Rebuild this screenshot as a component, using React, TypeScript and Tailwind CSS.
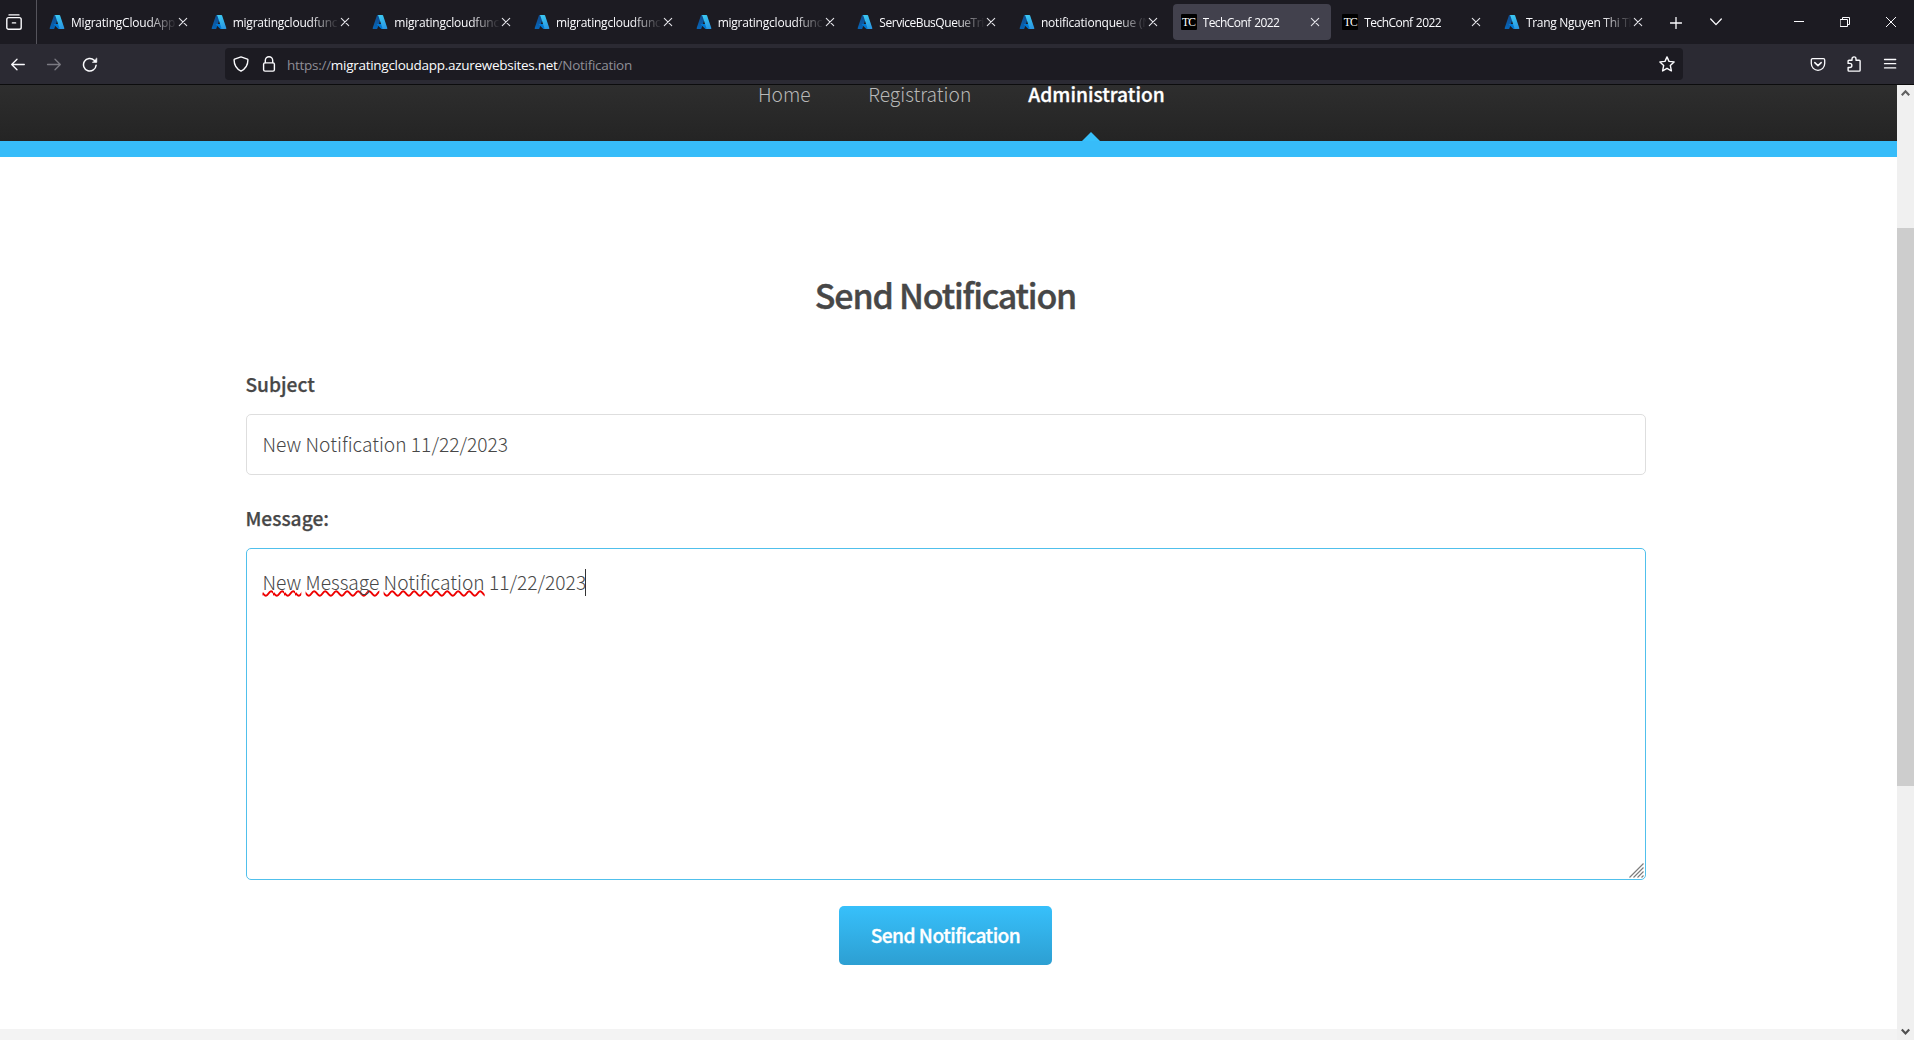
import type { ReactNode } from 'react';

type TabData = { title: string; icon: 'azure' | 'tc'; active?: boolean; tracking: string };

const TABS: TabData[] = [
  { title: 'MigratingCloudApp', icon: 'azure', tracking: 'tracking-[-0.22px]' },
  { title: 'migratingcloudfunc', icon: 'azure', tracking: 'tracking-[-0.22px]' },
  { title: 'migratingcloudfunc', icon: 'azure', tracking: 'tracking-[-0.22px]' },
  { title: 'migratingcloudfunc', icon: 'azure', tracking: 'tracking-[-0.22px]' },
  { title: 'migratingcloudfunc', icon: 'azure', tracking: 'tracking-[-0.22px]' },
  { title: 'ServiceBusQueueTrig', icon: 'azure', tracking: 'tracking-[-0.45px]' },
  { title: 'notificationqueue (N', icon: 'azure', tracking: 'tracking-[-0.22px]' },
  { title: 'TechConf 2022', icon: 'tc', active: true, tracking: 'tracking-[-0.55px] [word-spacing:0.8px]' },
  { title: 'TechConf 2022', icon: 'tc', tracking: 'tracking-[-0.55px] [word-spacing:0.8px]' },
  { title: 'Trang Nguyen Thi Th', icon: 'azure', tracking: 'tracking-[-0.3px]' },
];

function Line({ className = '', width = 1.2, size = 16, children }: { className?: string; width?: number; size?: number; children: ReactNode }) {
  return (
    <svg
      width={size}
      height={size}
      viewBox={`0 0 ${size} ${size}`}
      fill="none"
      stroke="currentColor"
      strokeWidth={width}
      strokeLinecap="round"
      strokeLinejoin="round"
      className={`shrink-0 ${className}`}
    >
      {children}
    </svg>
  );
}

function AzureIcon() {
  return (
    <svg width="16" height="16" viewBox="0 0 96 96" className="shrink-0">
      <defs>
        <linearGradient id="azLeft" x1="49" y1="7.4" x2="17" y2="103.8" gradientUnits="userSpaceOnUse">
          <stop offset="0" stopColor="#114a8b" />
          <stop offset="1" stopColor="#0669bc" />
        </linearGradient>
        <linearGradient id="azRight" x1="46" y1="5" x2="82" y2="92" gradientUnits="userSpaceOnUse">
          <stop offset="0" stopColor="#3ccbf4" />
          <stop offset="1" stopColor="#2892df" />
        </linearGradient>
      </defs>
      <path fill="url(#azLeft)" d="M33.3 6.5h26L32.3 86.6a4.2 4.2 0 0 1-3.9 2.8H8.1a4.1 4.1 0 0 1-3.9-5.5L29.4 9.4a4.2 4.2 0 0 1 3.9-2.9z" />
      <path fill="#0078d4" d="M71.2 60.3H29.9a1.9 1.9 0 0 0-1.3 3.3l26.5 24.7a4.2 4.2 0 0 0 2.9 1.1h23.4z" />
      <path fill="url(#azRight)" d="M66.6 9.4a4.1 4.1 0 0 0-3.9-2.8H33.6a4.1 4.1 0 0 1 3.9 2.8l25.2 74.5a4.1 4.1 0 0 1-3.9 5.5h29.1a4.1 4.1 0 0 0 3.9-5.5z" />
    </svg>
  );
}

function TechConfIcon() {
  return (
    <span className="flex h-4 w-4 shrink-0 items-center justify-center rounded-[1px] bg-black font-['Liberation_Serif',serif] text-[11.5px] leading-4 tracking-[-0.8px] text-white">
      TC
    </span>
  );
}

function Tab({ tab }: { tab: TabData }) {
  return (
    <div className={`flex h-9 w-[158px] shrink-0 items-center rounded-[4px] pl-2 ${tab.active ? 'bg-[#42414d]' : ''}`}>
      {tab.icon === 'azure' ? <AzureIcon /> : <TechConfIcon />}
      <div
        className={`ml-[6px] w-[105px] overflow-hidden whitespace-nowrap pt-px text-[12px] leading-[17px] text-[#fbfbfe] [mask-image:linear-gradient(to_right,black_76px,transparent_106px)] ${tab.tracking}`}
      >
        {tab.title}
      </div>
      <Line size={10} width={1.1} className="ml-[2px] text-[#e4e4ea]">
        <path d="M1.3 1.3l7.4 7.4M8.7 1.3L1.3 8.7" />
      </Line>
    </div>
  );
}

function TabStrip() {
  return (
    <div className="flex h-11 items-center bg-[#1c1b22] text-[#fbfbfe]">
      <div className="flex h-11 w-[37px] shrink-0 items-center border-r border-[#55545c] pl-[6px]">
        <Line width={1.4}>
          <path d="M3 0.9h10" />
          <path d="M2.6 3.6h10.8a1.8 1.8 0 0 1 1.8 1.8v8a1.8 1.8 0 0 1-1.8 1.8H2.6a1.8 1.8 0 0 1-1.8-1.8v-8a1.8 1.8 0 0 1 1.8-1.8z" />
          <path d="M6.4 8.9h3.2" />
        </Line>
      </div>
      <div className="flex gap-[3.67px] pl-1">
        {TABS.map((tab, i) => (
          <Tab key={i} tab={tab} />
        ))}
      </div>
      <Line size={12} width={1.3} className="ml-[16.4px] mt-px">
        <path d="M6 0.4v11.2M0.4 6h11.2" />
      </Line>
      <Line size={12} width={1.3} className="ml-[28px]">
        <path d="M0.7 3l5.3 5.6L11.3 3" />
      </Line>
      <div className="ml-auto flex items-center pr-[18px]">
        <Line size={10} width={1} className="mr-[36px]">
          <path d="M0 4.5h10" strokeLinecap="butt" />
        </Line>
        <Line size={10} width={1} className="mr-[36px]">
          <path strokeLinejoin="miter" d="M0.5 2.5h7v7h-7zM2.5 2.5v-2h7v7h-2" />
        </Line>
        <Line size={10} width={1}>
          <path d="M0.2 0.2l9.6 9.6M9.8 0.2L0.2 9.8" />
        </Line>
      </div>
    </div>
  );
}

function Toolbar() {
  return (
    <div className="flex h-[41px] items-center border-b border-[#0c0c0d] bg-[#2b2a33] text-[#fbfbfe]">
      <Line width={1.3} className="ml-[10px]">
        <path d="M14.3 8.5H1.8M7 3.2L1.7 8.5 7 13.8" />
      </Line>
      <Line width={1.3} className="ml-5 text-[#7b7a82]">
        <path d="M1.5 8.5h12.7M9 3.2l5.3 5.3L9 13.8" />
      </Line>
      <Line width={1.5} className="ml-5">
        <path d="M14.1 9.3A6.3 6.3 0 1 1 12.2 4.2L13.5 5.4" />
        <path d="M14.8 2.3v4.1h-4.1z" fill="currentColor" strokeWidth="0.6" />
      </Line>
      <div className="ml-[127px] flex h-8 w-[1458px] items-center rounded-[4px] bg-[#1c1b22]">
        <Line width={1.4} className="ml-2">
          <path d="M8 0.9L14.4 3.1a0.8 0.8 0 0 1 0.5 0.8C14.9 9 12.6 12.6 8 15.1 3.4 12.6 1.1 9 1.1 3.9a0.8 0.8 0 0 1 0.5-0.8z" />
        </Line>
        <Line width={1.4} className="ml-3">
          <path d="M4.3 6.6V4.4a3.7 3.7 0 0 1 7.4 0v2.2" />
          <rect x="2.6" y="6.9" width="10.8" height="8.2" rx="1.4" />
        </Line>
        <div className="ml-[10px] whitespace-nowrap pt-[2px] text-[13.5px] leading-5 tracking-[-0.28px] text-[#8f8e96]">
          https://
          <span className="text-[#fbfbfe]">migratingcloudapp.azurewebsites.net</span>
          /Notification
        </div>
        <Line width={1.4} className="ml-auto mr-2">
          <path d="M8 0.9l2 4.5 5.1 0.5-3.8 3.5 1.1 5.5L8 12.3l-4.4 2.6 1.1-5.5L0.9 5.9 6 5.4z" />
        </Line>
      </div>
      <Line width={1.3} className="ml-[127px]">
        <path d="M2.6 2.6h10.8a1.3 1.3 0 0 1 1.3 1.3v3.7a6.7 6.7 0 0 1-13.4 0V3.9a1.3 1.3 0 0 1 1.3-1.3z" />
        <path d="M4.8 6.6L8 9.6l3.2-3" strokeWidth="1.5" />
      </Line>
      <Line width={1.4} className="ml-5">
        <path d="M2.1 7.4V5.2a0.9 0.9 0 0 1 0.9-0.9h3V2.9a2 2 0 0 1 4 0v1.4h3.2a0.9 0.9 0 0 1 0.9 0.9v9a0.9 0.9 0 0 1-0.9 0.9H3a0.9 0.9 0 0 1-0.9-0.9v-2.7h1.7a2 2 0 0 0 0-4.1z" />
      </Line>
      <Line width={1.3} className="ml-5">
        <path d="M2.5 3.5h11.2M2.5 7.7h11.2M2.5 11.9h11.2" />
      </Line>
    </div>
  );
}

function SiteHeader() {
  return (
    <header className="shrink-0">
      <nav className="flex h-14 items-start bg-linear-to-b from-[#2e2e2e] to-[#242424] pl-[758px] text-[19.2px] font-light leading-[30px] text-[#b8b8b8]">
        <a className="-mt-[6px]">Home</a>
        <a className="-mt-[6px] ml-[57.5px]">Registration</a>
        <div className="ml-[57px] flex h-14 flex-col items-center justify-between">
          <a className="-mt-[6px] font-medium text-white [-webkit-text-stroke:0.3px_white]">Administration</a>
          <svg width="18" height="9" viewBox="0 0 18 9" className="mr-[10px]">
            <path d="M0 9L9 0l9 9z" fill="#37c0fb" />
          </svg>
        </div>
      </nav>
      <div className="h-4 bg-[#37bcf9]" />
    </header>
  );
}

function NotificationForm() {
  return (
    <main className="flex h-[872px] flex-col pl-[246px] pr-[251px] text-[19.2px] text-[#474747]">
      <h1 className="mt-[113px] pr-px text-center text-[34px] font-medium leading-[50px] tracking-[-1.2px] [-webkit-text-stroke:0.4px_#474747]">
        Send Notification
      </h1>
      <label className="-ml-[0.6px] mt-[49px] font-medium leading-[30px] [-webkit-text-stroke:0.25px_#474747]">Subject</label>
      <div className="mt-[15px] flex h-[61px] items-center rounded-[5px] border border-[#dedede] px-[15.5px] font-light">
        New Notification 11/22/2023
      </div>
      <label className="-ml-[0.6px] mt-[28px] font-medium leading-[30px] [-webkit-text-stroke:0.25px_#474747]">Message:</label>
      <div className="mt-[15px] flex h-[332px] flex-col justify-between rounded-[5px] border border-[#50c0ec]">
        <div className="flex pl-[15.5px] pt-[19px] font-light leading-[29px]">
          <span className="whitespace-pre">
            <Misspelt>New</Misspelt> <Misspelt>Message</Misspelt> <Misspelt>Notification</Misspelt> 11/22/2023
          </span>
          <span className="-ml-[1.5px] mt-px h-[27px] w-px bg-[#333333]" />
        </div>
        <svg width="15" height="15" viewBox="0 0 15 15" className="mb-px mr-px self-end" stroke="#7d7d7d" strokeWidth="1.2">
          <path d="M0.5 14.5l14-14M4.5 14.5l10-10M8.5 14.5l6-6M12.5 14.5l2-2" />
        </svg>
      </div>
      <button className="mr-px mt-[26px] h-[59px] w-[213px] self-center rounded-[5px] bg-linear-to-b from-[#37c0fb] to-[#2d9fd2] font-medium tracking-[-0.55px] text-white [-webkit-text-stroke:0.3px_white]">
        Send Notification
      </button>
    </main>
  );
}

function Misspelt({ children }: { children: ReactNode }) {
  return (
    <span className="underline decoration-[#ee0000] decoration-wavy decoration-[1.5px] underline-offset-0 [text-decoration-skip-ink:none]">
      {children}
    </span>
  );
}

function Scrollbar() {
  return (
    <div className="flex w-[17px] shrink-0 flex-col items-center bg-[#f0f0f0]">
      <svg width="17" height="17" viewBox="0 0 17 17" fill="none" stroke="#606060" strokeWidth="2.2">
        <path d="M4.8 10.2L8.5 6.3l3.7 3.9" />
      </svg>
      <div className="mt-[126px] h-[558px] w-full bg-[#cdcdcd]" />
      <svg width="17" height="17" viewBox="0 0 17 17" fill="none" stroke="#505050" strokeWidth="2.2" className="mt-auto">
        <path d="M4.8 6.6l3.7 3.9 3.7-3.9" />
      </svg>
    </div>
  );
}

export default function App() {
  return (
    <div className="flex h-[1040px] w-[1914px] flex-col overflow-hidden bg-white font-['Open_Sans','Noto_Sans',sans-serif]">
      <TabStrip />
      <Toolbar />
      <div className="flex min-h-0 flex-1">
        <div className="flex min-w-0 flex-1 flex-col font-['Noto_Sans_CJK_SC',sans-serif]">
          <SiteHeader />
          <NotificationForm />
          <footer className="flex-1 bg-[#f3f3f3]" />
        </div>
        <Scrollbar />
      </div>
    </div>
  );
}
